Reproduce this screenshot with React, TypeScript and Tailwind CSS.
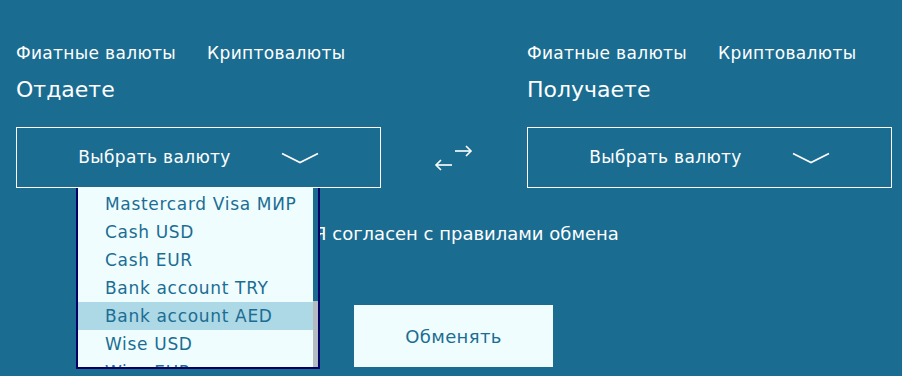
import React from "react";

const items = [
  "Mastercard Visa МИР",
  "Cash USD",
  "Cash EUR",
  "Bank account TRY",
  "Bank account AED",
  "Wise USD",
  "Wise EUR",
];

function Chevron() {
  return (
    <svg width="38" height="12" viewBox="0 0 38 12" fill="none">
      <path d="M1 1.5 L19 10.5 L37 1.5" stroke="white" strokeWidth="1.6" />
    </svg>
  );
}

function SelectBox() {
  return (
    <div className="h-[61px] border border-white flex items-center justify-center gap-[50px]">
      <span className="text-[17px] tracking-[0.02em] text-white">Выбрать валюту</span>
      <Chevron />
    </div>
  );
}

function Tabs() {
  return (
    <div className="flex gap-[31px] text-[17px] tracking-[0.02em] leading-6 text-white">
      <span>Фиатные валюты</span>
      <span>Криптовалюты</span>
    </div>
  );
}

export default function App() {
  return (
    <div className="w-[902px] h-[376px] bg-[#1a6d91] overflow-hidden relative font-['DejaVu_Sans',sans-serif]">
      <div className="flex pl-4 pt-[41px]">
        <div className="w-[365px] relative">
          <Tabs />
          <div className="mt-[10px] text-[22px] leading-[30px] text-white">Отдаете</div>
          <div className="mt-[22px]">
            <SelectBox />
          </div>
          <div className="absolute left-[60px] top-[147px] w-[244px] h-[181px] z-10 bg-[#f0fdff] border-x-2 border-b-2 border-[#000066] flex">
            <div className="flex-1 overflow-hidden">
              {items.map((it, i) => (
                <div
                  key={it}
                  className={`h-[28px] flex items-center pl-[27px] pt-[2px] text-[17px] tracking-[0.04em] text-[#1b6d93] whitespace-nowrap ${i === 0 ? "mt-[2px]" : ""} ${i === 4 ? "bg-[#add8e6]" : ""}`}
                >
                  {it}
                </div>
              ))}
            </div>
            <div className="w-[5px] flex flex-col">
              <div className="h-[113px] bg-[#1a6d91]" />
              <div className="flex-1 bg-[#b3bdc1]" />
            </div>
          </div>
        </div>
        <div className="w-[146px] flex items-end justify-center">
          <div className="h-[61px] flex items-center">
            <svg width="40" height="30" viewBox="0 0 40 30" fill="none" stroke="white" strokeWidth="1.6">
              <path d="M21 8 H37" />
              <path d="M32 3 L37 8 L32 13" />
              <path d="M2 22 H18" />
              <path d="M7 17 L2 22 L7 27" />
            </svg>
          </div>
        </div>
        <div className="w-[365px]">
          <Tabs />
          <div className="mt-[10px] text-[22px] leading-[30px] text-white">Получаете</div>
          <div className="mt-[22px]">
            <SelectBox />
          </div>
        </div>
      </div>
      <div className="flex items-center gap-[10px] pl-[288px] mt-[34px]">
        <div className="w-4 h-4 border border-white" />
        <span className="text-[18px] leading-6 text-white">Я согласен с правилами обмена</span>
      </div>
      <div className="pl-[354px] mt-[59px]">
        <button className="w-[199px] h-[62px] bg-[#f0fdff] text-[#1b6d93] text-[18px] tracking-[0.02em] flex items-center justify-center">
          Обменять
        </button>
      </div>
    </div>
  );
}
